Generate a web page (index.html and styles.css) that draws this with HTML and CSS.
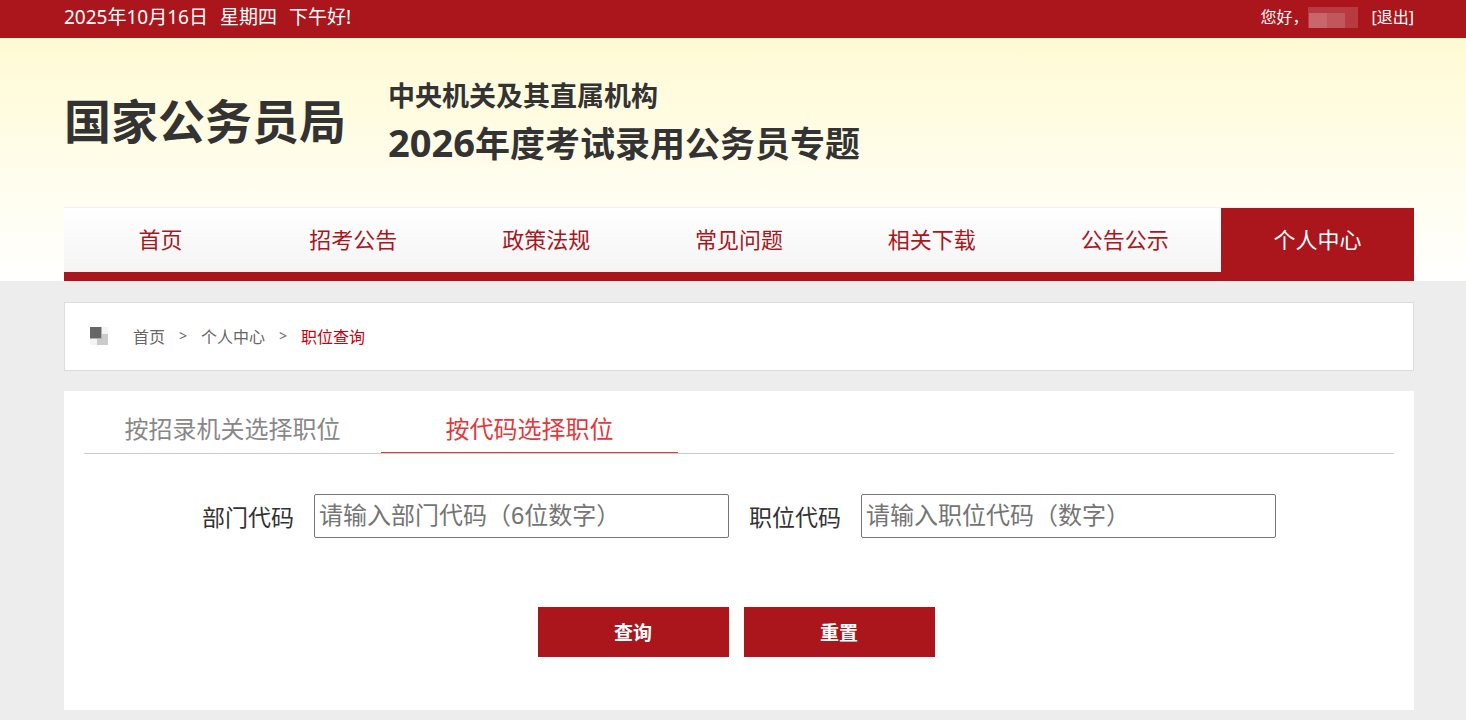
FILE: index.html
```html
<!DOCTYPE html>
<html lang="zh-CN">
<head>
    <meta charset="UTF-8">
    <meta name="viewport" content="width=device-width, initial-scale=1.0">
    <title>职位查询</title>
    <link rel="stylesheet" href="styles.css">
</head>
<body>
    <div class="topbar">
        <div class="date">
            <span>2025年10月16日</span>
            <span>星期四</span>
            <span>下午好!</span>
        </div>
        <div class="user">
            <span>您好，</span>
            <svg class="user-name" width="50" height="21" viewBox="0 0 50 21" aria-hidden="true">
                <rect width="50" height="21" fill="#b93a41"/>
                <rect x="1" y="6" width="18" height="15" fill="#c9666c"/>
                <rect x="19" y="6" width="18" height="15" fill="#c1575c"/>
            </svg>
            <a href="#">[退出]</a>
        </div>
    </div>

    <header class="header">
        <div class="brand">
            <h1>国家公务员局</h1>
            <div class="topic">
                <p class="topic-org">中央机关及其直属机构</p>
                <p class="topic-title"><span class="year">2026</span>年度考试录用公务员专题</p>
            </div>
        </div>
        <nav class="nav">
            <a href="#">首页</a>
            <a href="#">招考公告</a>
            <a href="#">政策法规</a>
            <a href="#">常见问题</a>
            <a href="#">相关下载</a>
            <a href="#">公告公示</a>
            <a href="#" class="active">个人中心</a>
        </nav>
    </header>

    <main class="main">
        <div class="crumbs">
            <svg width="18" height="18" viewBox="0 0 18 18" aria-hidden="true">
                <rect width="18" height="18" fill="#f4f4f4"/>
                <rect x="7" y="7" width="11" height="11" fill="#cbcbcb"/>
                <rect width="12" height="12" fill="#b0b0b0"/>
                <rect width="11" height="11" fill="#666"/>
            </svg>
            <a href="#">首页</a>
            <span class="sep">&gt;</span>
            <a href="#">个人中心</a>
            <span class="sep">&gt;</span>
            <a href="#" class="current">职位查询</a>
        </div>

        <div class="panel">
            <div class="tabs">
                <button type="button" class="tab">按招录机关选择职位</button>
                <button type="button" class="tab active">按代码选择职位</button>
            </div>
            <form>
                <div class="fields">
                    <div class="field">
                        <label for="deptCode">部门代码</label>
                        <input type="text" id="deptCode" placeholder="请输入部门代码（6位数字）">
                    </div>
                    <div class="field">
                        <label for="postCode">职位代码</label>
                        <input type="text" id="postCode" placeholder="请输入职位代码（数字）">
                    </div>
                </div>
                <div class="actions">
                    <button type="submit">查询</button>
                    <button type="reset">重置</button>
                </div>
            </form>
        </div>
    </main>
</body>
</html>
```
FILE: styles.css
```css
* {
    box-sizing: border-box;
}
body {
    margin: 0;
    background: #ededed;
    color: #333;
    font-family: "Noto Sans", "Noto Sans CJK SC", sans-serif;
    font-size: 16px;
}
a {
    color: inherit;
    text-decoration: none;
}
h1, p {
    margin: 0;
}
.topbar, .header, .main {
    padding-left: 64px;
    padding-right: 52px;
}

/* top bar */
.topbar {
    display: flex;
    justify-content: space-between;
    height: 38px;
    background: #aa161b;
    color: #fff;
    line-height: 35px;
}
.date {
    display: flex;
    gap: 12px;
    font-size: 19px;
}
.user {
    display: flex;
    align-items: center;
    height: 35px;
}
.user-name {
    margin-right: 13px;
}

/* header */
.header {
    background: linear-gradient(#fffad4, #fffef2 70%, #fff);
}
.brand {
    display: flex;
    align-items: center;
    gap: 42px;
    height: 169px;
    padding-bottom: 4px;
}
.brand h1 {
    font-size: 47px;
    line-height: 60px;
}
.topic {
    font-weight: bold;
}
.topic-org {
    font-size: 27px;
    line-height: 44px;
}
.topic-title {
    font-size: 35px;
    line-height: 48px;
}
.year {
    font-size: 38px;
}
.nav {
    display: flex;
    border-top: 1px solid #f2f2f2;
    border-bottom: 9px solid #aa161b;
    background: linear-gradient(#fff, #f4f4f4);
}
.nav a {
    flex: 1;
    padding-bottom: 2px;
    color: #aa161b;
    font-size: 22px;
    line-height: 62px;
    text-align: center;
}
.nav a.active {
    background: #aa161b;
    color: #fff;
}

/* breadcrumbs */
.main {
    padding-top: 21px;
    padding-bottom: 10px;
}
.crumbs {
    display: flex;
    align-items: center;
    height: 69px;
    margin-bottom: 20px;
    padding: 0 25px 2px;
    border: 1px solid #dcdcdc;
    background: #fff;
    color: #666;
}
.crumbs svg {
    margin-right: 25px;
}
.sep {
    width: 36px;
    font-size: 14px;
    text-align: center;
}
.crumbs .current {
    color: #c7000b;
}

/* search panel */
.panel {
    padding: 14px 20px 53px;
    background: #fff;
}
.tabs {
    display: flex;
    border-bottom: 1px solid #ccc;
}
.tab {
    width: 297px;
    height: 48px;
    padding: 0 0 2px;
    border: none;
    border-bottom: 1px solid transparent;
    background: none;
    color: #888;
    font-family: inherit;
    font-size: 24px;
    cursor: pointer;
}
.tab.active {
    border-bottom-color: #e4393c;
    color: #e4393c;
}
.fields {
    display: flex;
    justify-content: center;
    gap: 20px;
    padding-top: 40px;
}
.field {
    display: flex;
    align-items: center;
    gap: 20px;
}
.field label {
    font-size: 23px;
}
.field input {
    width: 415px;
    height: 44px;
    padding: 0 4px 1px;
    border: 1px solid #767676;
    border-radius: 2px;
    font-family: "Liberation Sans", "Noto Sans CJK SC", sans-serif;
    font-size: 24px;
}
.field input::placeholder {
    color: #757575;
}
.actions {
    display: flex;
    justify-content: center;
    gap: 15px;
    margin-top: 69px;
    padding-right: 6px;
}
.actions button {
    width: 191px;
    height: 50px;
    border: none;
    background: #aa161b;
    color: #fff;
    font-family: inherit;
    font-size: 19px;
    font-weight: bold;
    cursor: pointer;
}
```
